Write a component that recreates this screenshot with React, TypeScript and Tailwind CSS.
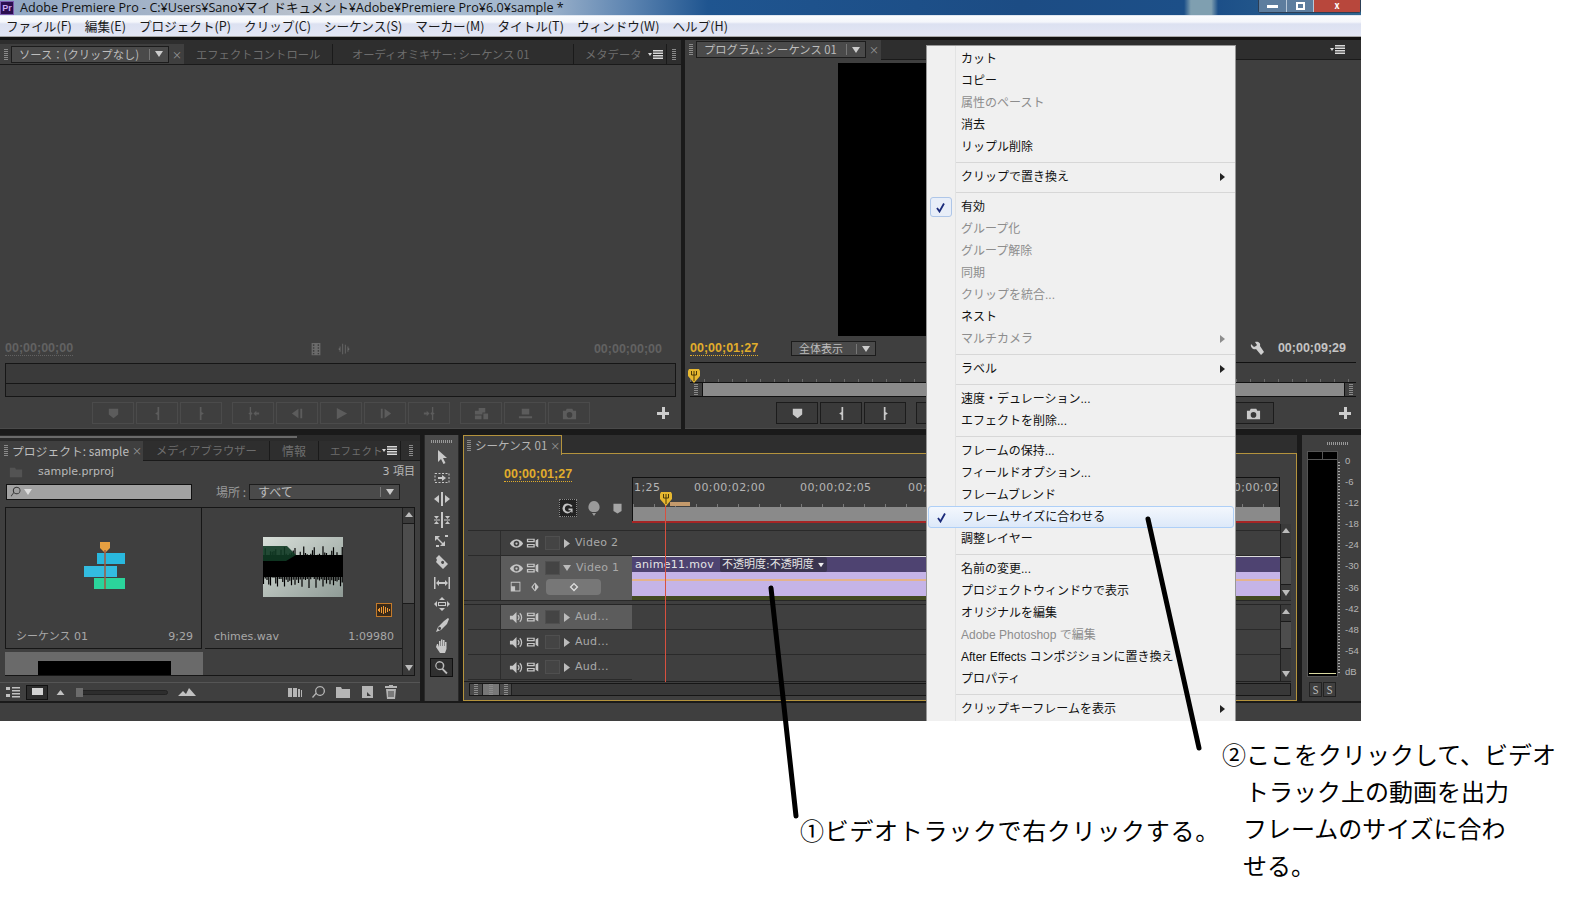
import type { ReactNode } from "react";

const menuBar = ["ファイル(F)", "編集(E)", "プロジェクト(P)", "クリップ(C)", "シーケンス(S)", "マーカー(M)", "タイトル(T)", "ウィンドウ(W)", "ヘルプ(H)"];

type MenuRow = { label?: string; off?: boolean; arrow?: boolean; check?: boolean; hot?: boolean; sep?: boolean };

const menuRows: MenuRow[] = [
  { label: "カット" },
  { label: "コピー" },
  { label: "属性のペースト", off: true },
  { label: "消去" },
  { label: "リップル削除" },
  { sep: true },
  { label: "クリップで置き換え", arrow: true },
  { sep: true },
  { label: "有効", check: true },
  { label: "グループ化", off: true },
  { label: "グループ解除", off: true },
  { label: "同期", off: true },
  { label: "クリップを統合...", off: true },
  { label: "ネスト" },
  { label: "マルチカメラ", off: true, arrow: true },
  { sep: true },
  { label: "ラベル", arrow: true },
  { sep: true },
  { label: "速度・デュレーション..." },
  { label: "エフェクトを削除..." },
  { sep: true },
  { label: "フレームの保持..." },
  { label: "フィールドオプション..." },
  { label: "フレームブレンド" },
  { label: "フレームサイズに合わせる", check: true, hot: true },
  { label: "調整レイヤー" },
  { sep: true },
  { label: "名前の変更..." },
  { label: "プロジェクトウィンドウで表示" },
  { label: "オリジナルを編集" },
  { label: "Adobe Photoshop で編集", off: true },
  { label: "After Effects コンポジションに置き換え" },
  { label: "プロパティ" },
  { sep: true },
  { label: "クリップキーフレームを表示", arrow: true },
];

function Grip() {
  return <div className="w-[4px] h-[11px] shrink-0 bg-[repeating-linear-gradient(0deg,#8a8a8a_0_1px,transparent_1px_2px)]" />;
}

function PanelMenu() {
  return (
    <svg width="15" height="9" viewBox="0 0 15 9" className="shrink-0" fill="#d8d8d8">
      <path d="M0 3h4L2 6z" />
      <path d="M5 0h10v1.400H5zM5 2.500h10v1.400H5zM5 5h10v1.400H5zM5 7.500h10v1.400H5z" />
    </svg>
  );
}

function Caret({ className = "" }: { className?: string }) {
  return (
    <svg width="8" height="6" viewBox="0 0 8 6" className={className} fill="currentColor">
      <path d="M0 0h8L4 6z" />
    </svg>
  );
}

function Glyph({ size = 16, children, className = "" }: { size?: number; children: ReactNode; className?: string }) {
  return (
    <svg width={size} height={size} viewBox="0 0 16 16" fill="currentColor" className={className}>
      {children}
    </svg>
  );
}

const transport: ReactNode[][] = [
  [
    <path key="a" d="M3 3h10v6l-5 4-5-4z" />,
    <path key="b" d="M8 1h1.800v14H8V9.500L5.500 8 8 6.500z" />,
    <path key="c" d="M6.200 1H8v5.500L10.500 8 8 9.500V15H6.200z" />,
  ],
  [
    <path key="d" d="M4 1h1.400v5.500L7 8 5.400 9.500V15H4V9L2.500 8 4 7zM8 8l3-3v2h3v2h-3v2z" />,
    <path key="e" d="M2 8l7-5v10zM11 3h2v10h-2z" />,
    <path key="f" d="M3 2l11 6-11 6z" />,
    <path key="g" d="M3 3h2v10H3zM7 3l7 5-7 5z" />,
    <path key="h" d="M2 7h3V5l3 3-3 3V9H2zM10.600 1H12v6l1.500 1L12 9v6h-1.400V9.500L9 8l1.600-1.500z" />,
  ],
  [
    <path key="i" d="M5 2h7v5H9v2H1V5h4zM10 8h5v6h-5zM1 10h7v4H1z" />,
    <path key="j" d="M4 3h8v6H4zM1 11h14v2H1z" />,
    <path key="k" d="M1 5h3l1-2h6l1 2h3v9H1zM8 6.500a3 3 0 100 6 3 3 0 000-6z" />,
  ],
];

function TransportRow({ dim }: { dim?: boolean }) {
  return (
    <div className="flex gap-[10px] pl-[92px] h-[22px]">
      {transport.map((group, g) => (
        <div key={g} className="flex gap-[2px]">
          {group.map((icon, i) => (
            <div
              key={i}
              className={
                dim
                  ? "w-[42px] h-[22px] flex items-center justify-center border border-[#4b4b4b] text-[#5c5c5c]"
                  : "w-[42px] h-[22px] flex items-center justify-center border border-[#1c1c1c] bg-[#3a3a3a] text-[#c9c9c9]"
              }
            >
              <Glyph size={15}>{icon}</Glyph>
            </div>
          ))}
        </div>
      ))}
    </div>
  );
}

function SourcePanel() {
  return (
    <div className="w-[681px] h-full flex flex-col bg-[#3f3f3f]">
      <div className="h-[25px] flex items-end bg-[#2e2e2e] border-b border-[#1a1a1a] text-[11.300px] leading-[17px] text-[#6d6d6d]">
        <div className="w-[184px] h-[20px] flex items-center bg-[#3f3f3f] pl-[4px]">
          <Grip />
          <div className="ml-[3px] w-[158px] h-[17px] flex items-center border border-[#1c1c1c] bg-[#4a4a4a] text-[#bdbdbd] pl-[7px]">
            <span className="flex-1">ソース：(クリップなし)</span>
            <span className="w-px h-[11px] bg-[#777]" />
            <Caret className="mx-[5px] text-[#ccc]" />
          </div>
          <span className="ml-[3px] text-[10px] text-[#999]">×</span>
        </div>
        <div className="w-[149px] h-[20px] pl-[12px] flex items-center border-r border-[#1a1a1a]">エフェクトコントロール</div>
        <div className="w-[241px] h-[20px] pl-[19px] flex items-center border-r border-[#1a1a1a]">オーディオミキサー: シーケンス 01</div>
        <div className="w-[74px] h-[20px] pl-[11px] flex items-center whitespace-nowrap">メタデータ</div>
        <div className="w-[18px] h-[20px] flex items-center"><PanelMenu /></div>
        <div className="flex-1 h-[20px] flex items-center justify-center border-l border-[#1a1a1a]"><Grip /></div>
      </div>
      <div className="flex-1" />
      <div className="flex justify-between items-center px-[5px] h-[16px] mr-[14px] relative text-[12.500px] text-[#626262] font-['Liberation_Sans',sans-serif] font-bold">
        <span className="border-b border-dotted border-[#626262] leading-[13px]">00;00;00;00</span>
        <div className="flex gap-[14px] text-[#6a6a6a] -ml-[8px]">
          <Glyph size={14}><path d="M3 1h10v14H3zM4.500 2.500v2h1.600v-2zM4.500 6v1.800h1.600V6zM4.500 9.200V11h1.600V9.200zM4.500 12.500v1.500h1.600v-1.500zM9.900 2.500v2h1.600v-2zM9.900 6v1.800h1.600V6zM9.900 9.200V11h1.600V9.200zM9.900 12.500v1.500h1.600v-1.500z" /></Glyph>
          <Glyph size={14}><path d="M2 7h1V5h1v6H3V9H2zM6 2h1v12H6zM9 3h1v10H9zM12 5h1v2h1v2h-1v2h-1z" /></Glyph>
        </div>
        <span>00;00;00;00</span>
      </div>
      <div className="mt-[6px] mx-[5px] h-[20px] border border-[#161616] border-b-0 bg-[#3a3a3a]" />
      <div className="mx-[5px] h-[14px] border border-[#161616] bg-[#393939]" />
      <div className="mt-[5px] relative">
        <TransportRow dim />
        <span className="absolute right-[12px] top-[5px] w-[12px] h-[12px] bg-[linear-gradient(#ccc,#ccc),linear-gradient(#ccc,#ccc)] bg-[length:12px_3px,3px_12px] bg-center bg-no-repeat" />
      </div>
      <div className="h-[5px] border-b border-[#4a4a4a]" />
    </div>
  );
}

function Playhead({ className = "" }: { className?: string }) {
  return (
    <svg width="12" height="14" viewBox="0 0 12 14" className={className}>
      <path d="M1 0h10l1 2v5l-6 7-6-7V2z" fill="#e7b830" />
      <path d="M3.500 2v4h5V2M6 2v10" stroke="#4b3a08" strokeWidth="1" fill="none" />
    </svg>
  );
}

function ProgramPanel() {
  return (
    <div className="flex-1 h-full flex flex-col bg-[#3f3f3f]">
      <div className="h-[20px] flex items-center bg-[#2e2e2e] border-b border-[#1a1a1a] text-[11.300px] leading-[17px]">
        <div className="w-[196px] h-[20px] flex items-center bg-[#3f3f3f] pl-[4px]">
          <Grip />
          <div className="ml-[3px] w-[170px] h-[17px] flex items-center border border-[#1c1c1c] bg-[#4a4a4a] text-[#bdbdbd] pl-[7px] whitespace-nowrap">
            <span className="flex-1">プログラム: シーケンス 01</span>
            <span className="w-px h-[11px] bg-[#777]" />
            <Caret className="mx-[5px] text-[#ccc]" />
          </div>
          <span className="ml-[3px] text-[10px] text-[#999]">×</span>
        </div>
        <div className="flex-1" />
        <div className="pr-[16px]"><PanelMenu /></div>
      </div>
      <div className="h-[3px]" />
      <div className="ml-[153px] w-[250px] h-[273px] bg-black" />
      <div className="h-[5px]" />
      <div className="flex items-center h-[15px] pl-[5px] text-[12.500px]">
        <span className="font-['Liberation_Sans',sans-serif] font-bold text-[#e1ad2c] border-b border-dotted border-[#e1ad2c] leading-[13px]">00;00;01;27</span>
        <div className="ml-[33px] w-[85px] h-[15px] flex items-center border border-[#1c1c1c] bg-[#4a4a4a] text-[#bdbdbd] text-[11px] pl-[7px]">
          <span className="flex-1">全体表示</span>
          <span className="w-px h-[10px] bg-[#777]" />
          <Caret className="mx-[5px] text-[#ccc]" />
        </div>
        <div className="flex-1" />
        <Glyph size={16} className="text-[#cfcfcf] mr-[13px]"><path d="M2 3l3 3 2-1 1-1-2-3c3-1 6 1 5 4l4 6-3 3-5-6C5 9 1 7 2 3z" /></Glyph>
        <span className="font-['Liberation_Sans',sans-serif] font-bold text-[#c4c4c4] mr-[15px]">00;00;09;29</span>
      </div>
      <div className="h-[6px]" />
      <div className="relative mx-[5px] h-[35px] border-y border-[#111] flex flex-col">
        <div className="h-[20px] border-b border-[#111] bg-[repeating-linear-gradient(90deg,#6a6a6a_0_1px,transparent_1px_14px)] bg-[length:100%_3px] bg-bottom bg-no-repeat" />
        <div className="flex-1 flex">
          <div className="w-[13px] bg-[#3f3f3f] border-r border-[#111] flex items-center justify-center"><Grip /></div>
          <div className="flex-1 bg-[#8a8a8a]" />
          <div className="w-[12px] bg-[#3f3f3f] border-l border-[#111] flex items-center justify-center"><Grip /></div>
        </div>
        <Playhead className="absolute -left-[2px] top-[6px]" />
      </div>
      <div className="mt-[5px] relative">
        <div className="-ml-[1px]"><TransportRow /></div>
        <span className="absolute right-[10px] top-[5px] w-[12px] h-[12px] bg-[linear-gradient(#ccc,#ccc),linear-gradient(#ccc,#ccc)] bg-[length:12px_3px,3px_12px] bg-center bg-no-repeat" />
      </div>
      <div className="h-[5px] border-b border-[#4a4a4a]" />
    </div>
  );
}

const wave = Array.from({ length: 46 }, (_, i) => {
  const a = Math.abs(Math.sin(i * 1.7) * 7 + Math.sin(i * 0.6) * 5);
  const b = Math.abs(Math.cos(i * 2.3) * 7 + Math.sin(i * 0.9) * 4);
  return `M${i * 1.75 + 0.5} ${21 - a}V${40 + b}`;
}).join("");

function ProjectPanel() {
  return (
    <div className="w-[420px] h-full flex flex-col bg-[#2a2a2a]">
      <div className="h-[2px] w-[297px] bg-[#6a6a6a] mt-[1px] mb-[3px]" />
      <div className="h-[20px] flex items-center bg-[#2e2e2e] border-b border-[#1a1a1a] text-[11.300px] leading-[17px] text-[#6d6d6d] whitespace-nowrap">
        <div className="w-[143px] h-[20px] flex items-center bg-[#3f3f3f] pl-[4px] text-[#bdbdbd]">
          <Grip />
          <span className="ml-[4px] text-[11.800px]">プロジェクト: sample</span>
          <span className="ml-[3px] text-[10px] text-[#999]">×</span>
        </div>
        <div className="w-[127px] h-[20px] pl-[13px] flex items-center border-r border-[#1a1a1a]">メディアブラウザー</div>
        <div className="w-[49px] h-[20px] pl-[12px] flex items-center border-r border-[#1a1a1a] text-[12px]">情報</div>
        <div className="w-[63px] h-[20px] pl-[11px] flex items-center text-[10.500px]">エフェクト</div>
        <div className="w-[18px] h-[20px] flex items-center"><PanelMenu /></div>
        <div className="flex-1 h-[20px] flex items-center justify-center border-l border-[#1a1a1a]"><Grip /></div>
      </div>
      <div className="flex-1 flex flex-col bg-[#3f3f3f]">
        <div className="h-[20px] flex items-center pl-[9px] pr-[5px] text-[12px] text-[#b8b8b8] font-['DejaVu_Sans','Noto_Sans_CJK_JP',sans-serif] mt-[1px]">
          <Glyph size={14} className="text-[#535353]"><path d="M1 3h6l1 2h7v9H1z" /></Glyph>
          <span className="ml-[15px] flex-1 text-[11px]">sample.prproj</span>
          <span className="text-[11px]">3 項目</span>
        </div>
        <div className="h-[16px] flex items-center pl-[6px] mt-[2px] text-[12px] text-[#9a9a9a]">
          <div className="w-[186px] h-[16px] bg-[#a2a2a2] border border-[#111] flex items-center pl-[3px] text-[#333]">
            <Glyph size={12}><path d="M9 1a5 5 0 11-3.800 8.300L1.800 14 1 13.200l3.500-4.700A5 5 0 019 1zm0 1.200a3.800 3.800 0 100 7.600 3.800 3.800 0 000-7.600z" /></Glyph>
            <Caret className="ml-[2px] text-[#ddd]" />
          </div>
          <span className="ml-[24px] w-[33px] whitespace-nowrap">場所 :</span>
          <div className="w-[151px] h-[16px] flex items-center border border-[#1c1c1c] bg-[#4a4a4a] text-[#bdbdbd] pl-[8px]">
            <span className="flex-1">すべて</span>
            <span className="w-px h-[10px] bg-[#777]" />
            <Caret className="mx-[5px] text-[#ccc]" />
          </div>
        </div>
        <div className="mt-[7px] ml-[5px] mr-[5px] h-[169px] flex border border-[#161616] border-l-0">
          <div className="flex-1 flex flex-col">
            <div className="flex gap-[3px] h-[141px] text-[11px] text-[#a8a8a8] font-['DejaVu_Sans','Noto_Sans_CJK_JP',sans-serif]">
              <div className="relative w-[197px] border border-[#161616] border-t-0">
                <svg width="45" height="48" viewBox="0 0 45 48" className="absolute left-[77px] top-[34px]">
                  <path d="M17 0h10v6l-5 5-5-5z" fill="#e6a041" />
                  <rect x="14" y="11" width="28" height="11" fill="#29b8de" />
                  <rect x="1" y="24" width="33" height="11" fill="#33bce0" />
                  <rect x="11" y="36" width="31" height="11" fill="#2bd49b" />
                  <path d="M22 8v39" stroke="#a3593f" strokeWidth="1.500" />
                </svg>
                <div className="absolute left-[10px] right-[8px] bottom-[3px] flex justify-between">
                  <span>シーケンス 01</span>
                  <span>9;29</span>
                </div>
              </div>
              <div className="relative flex-1 border-b border-[#161616]">
                <svg width="80" height="60" viewBox="0 0 80 60" className="absolute left-[58px] top-[29px]">
                  <defs>
                    <linearGradient id="wv" x1="0" y1="0" x2="1" y2="1">
                      <stop offset="0" stopColor="#d8dfd9" />
                      <stop offset="1" stopColor="#8f9b96" />
                    </linearGradient>
                  </defs>
                  <rect width="80" height="60" fill="url(#wv)" />
                  <path d={wave} stroke="#000" strokeWidth="1.200" />
                  <rect y="18" width="80" height="22" fill="#000" />
                  <path d="M0 9h24l9 9-10 6H0z" fill="#0f3a24" opacity="0.900" />
                </svg>
                <div className="absolute left-[171px] top-[95px] w-[16px] h-[14px] border border-[#c47a2a] bg-[#3a2a18] flex items-center justify-center">
                  <svg width="12" height="8" viewBox="0 0 12 8" fill="#f09a35"><path d="M0 3h1V2h1v4H1V5H0zM3 1h1v6H3zM5 0h1v8H5zM7 1h1v6H7zM9 2h1v4H9zM11 3h1v2h-1z" /></svg>
                </div>
                <div className="absolute left-[9px] right-[8px] bottom-[3px] flex justify-between">
                  <span>chimes.wav</span>
                  <span>1:09980</span>
                </div>
              </div>
            </div>
            <div className="flex-1 mt-[3px]">
              <div className="w-[198px] h-full bg-[#6a6a6a] pt-[9px]">
                <div className="ml-[33px] w-[133px] h-full max-h-[14px] bg-black" />
              </div>
            </div>
          </div>
          <VScroll thumbTop={15} thumbH={81} w={12} />
        </div>
        <div className="mt-[6px] flex-1 flex items-center border-t border-[#555] pl-[5px] text-[#c2c2c2]">
          <Glyph size={16}><path d="M1 3h4v3H1zM1 10h4v3H1zM7 3h8v1.400H7zM7 6h8v1.400H7zM7 9h8v1.400H7zM7 12h8v1.400H7z" /></Glyph>
          <div className="ml-[5px] w-[22px] h-[15px] border border-[#111] bg-[#2d2d2d] flex items-center justify-center">
            <div className="w-[11px] h-[9px] bg-[#d2d2d2] border-b-2 border-[#2d2d2d]" />
          </div>
          <svg width="9" height="5" viewBox="0 0 11 7" fill="#c2c2c2" className="ml-[8px]"><path d="M0 7l5.500-7L11 7z" /></svg>
          <div className="relative ml-[11px] w-[92px] h-[5px] rounded-full bg-[#2d2d2d] border border-[#222]">
            <span className="absolute -left-[1px] -top-[3px] w-[7px] h-[9px] bg-[#6c6c6c]" />
          </div>
          <svg width="18" height="8" viewBox="0 0 18 8" fill="#c2c2c2" className="ml-[10px]"><path d="M0 8l5-5 3 3 3-6 7 8z" /></svg>
          <div className="ml-[91px] flex items-center gap-[8px] text-[#b5b5b5]">
            <Glyph size={16}><path d="M1 4h4v9H1zM6 4h4v9H6zM11 5h2v8h-2zM14 6h1v7h-1z" /></Glyph>
            <Glyph size={16}><path d="M9 2a5 5 0 11-3.800 8.300L2 14l-1-1 3.500-4A5 5 0 019 2zm0 1.300a3.700 3.700 0 100 7.400 3.700 3.700 0 000-7.400z" /></Glyph>
            <Glyph size={16}><path d="M1 3h5l1 2h8v9H1z" /></Glyph>
            <Glyph size={16}><path d="M3 2h11v12H3zM8 8v4h4zM6 7h3v1H7v2H6z" /></Glyph>
            <Glyph size={16}><path d="M6 1h4v1h4v2H2V2h4zM3 5h10l-1 10H4zM5.500 7v6h1V7zM7.500 7v6h1V7zM9.500 7v6h1V7z" /></Glyph>
          </div>
        </div>
      </div>
    </div>
  );
}

function VScroll({ thumbTop, thumbH, w }: { thumbTop: number; thumbH: number; w: number }) {
  return (
    <div className="relative shrink-0 border-l border-[#1f1f1f] bg-[#3a3a3a]" style={{ width: w }}>
      <svg width="8" height="5" viewBox="0 0 8 5" fill="#bbb" className="absolute top-[4px] left-1/2 -translate-x-1/2"><path d="M4 0l4 5H0z" /></svg>
      <div className="absolute left-0 right-0 bg-[#4d4d4d] border-y border-[#1a1a1a]" style={{ top: thumbTop, height: thumbH }} />
      <Caret className="absolute bottom-[4px] left-1/2 -translate-x-1/2 text-[#bbb]" />
    </div>
  );
}

function Toolbar() {
  const tools: ReactNode[] = [
    <path key="1" d="M4 1l9 8H9l2.500 5-2 1L7 10l-3 3z" />,
    <g key="2"><rect x="1" y="3.500" width="14" height="9" fill="none" stroke="currentColor" strokeDasharray="2 1.500" /><path d="M4 7h4V5l4 3-4 3V9H4z" /></g>,
    <path key="3" d="M7 1h2v14H7zM0 8l5-4v8zM16 8l-5-4v8z" />,
    <path key="4" d="M7 0h2v16H7zM0 4l5 0-2.500 3zM16 4h-5l2.500 3zM0 12h5l-2.500-3zM16 12h-5l2.500-3zM0 7.500h6v1H0zM10 7.500h6v1h-6z" />,
    <path key="5" d="M1 3l5 0-2 2 5 5 2-2v5H6l2-2-5-5-2 2zM11 2h3v2h-3zM2 12h3v2H2z" />,
    <path key="6" d="M5 1l9 9-5 5-7-7 1-2-1-2zM8 7a1.500 1.500 0 102 2 1.500 1.500 0 00-2-2z" />,
    <path key="7" d="M0 2h1.500v12H0zM14.500 2H16v12h-1.500zM2 8l3-3v2h6V5l3 3-3 3V9H5v2z" />,
    <path key="8" d="M8 1l3 3H5zM8 15l-3-3h6zM0 8l3-3v6zM16 8l-3-3v6zM4 6h8v4H4zM5 7v2h6V7z" />,
    <path key="9" d="M14 1l1 1-2 5-6 6-5 2 2-5 6-6zM5 10a1.500 1.500 0 102 2 1.500 1.500 0 00-2-2z" />,
    <path key="10" d="M3 6l1 0 1 3V3h1.500v5H7V1.500h1.500V8H9V2h1.500v6h.5V4h1.500v7l-1.500 4H6L2 9z" />,
  ];
  return (
    <div className="w-[35px] h-full bg-[#4a4a4a] flex flex-col items-center text-[#c8c8c8] border-x border-[#2a2a2a]">
      <div className="mt-[5px] w-[22px] h-[3px] bg-[repeating-linear-gradient(90deg,#999_0_1px,transparent_1px_2px)]" />
      <div className="flex flex-col items-center gap-[5px] mt-[6px]">
        {tools.map((t, i) => (
          <Glyph key={i} size={16}>{t}</Glyph>
        ))}
      </div>
      <div className="mt-[4px] w-[23px] h-[19px] bg-[#303030] border border-[#111] flex items-center justify-center">
        <Glyph size={15} className="text-[#bbb]"><path d="M6 1a5 5 0 013.900 8.100l4.600 4.600-1.400 1.400-4.600-4.600A5 5 0 116 1zm0 1.600a3.400 3.400 0 100 6.800 3.400 3.400 0 000-6.800z" /></Glyph>
      </div>
    </div>
  );
}

function TrackHead({ name, audio, selected, open }: { name: string; audio?: boolean; selected?: boolean; open?: boolean }) {
  return (
    <div className={open ? "h-[45px] flex border-b border-[#2a2a2a]" : "h-[25px] flex border-b border-[#2a2a2a]"}>
      <div className="w-[33px] shrink-0 border-r border-[#2d2d2d]" />
      <div className={selected ? "flex-1 bg-[#5c5c5c] pl-[8px] pt-[4px]" : "flex-1 pl-[8px] pt-[4px]"}>
        <div className="flex items-center h-[16px] text-[#c6c6c6]">
          {audio ? (
            <Glyph size={15}><path d="M1 6h3l4-4v12l-4-4H1zM10 5a4 4 0 010 6l-1-1a2.500 2.500 0 000-4zM12 3a7 7 0 010 10l-1-1a5.500 5.500 0 000-8z" /></Glyph>
          ) : (
            <Glyph size={15}><path d="M8 3.500c3.500 0 6 2.500 7 4.500-1 2-3.500 4.500-7 4.500S2 10 1 8c1-2 3.500-4.500 7-4.500zM8 5a3 3 0 100 6 3 3 0 000-6zM8 6.800a1.200 1.200 0 110 2.400 1.200 1.200 0 010-2.400z" /></Glyph>
          )}
          <Glyph size={14} className="ml-[2px]"><path d="M1 3h9v4H1zM2.500 4.300v1.400h6V4.300zM1 9h9v4H1zM2.500 10.300v1.400h6v-1.400zM11 5l3-2v10l-3-2z" /></Glyph>
          <div className="ml-[5px] w-[15px] h-[14px] border border-[#4f4f4f] bg-[#444]" />
          {open ? <Caret className="ml-[3px] text-[#bbb]" /> : (
            <svg width="6" height="9" viewBox="0 0 6 9" fill="#bbb" className="ml-[4px]"><path d="M0 0l6 4.500L0 9z" /></svg>
          )}
          <span className="ml-[5px] text-[11px] text-[#a9a9a9] font-['DejaVu_Sans',sans-serif] tracking-[0.3px]">{name}</span>
        </div>
        {open && (
          <div className="flex items-center h-[20px] mt-[1px] text-[#c6c6c6]">
            <Glyph size={14}><path d="M2 2h11v11H2zM3 3v9h9V3zM3 7h4v5H3z" /></Glyph>
            <Glyph size={12} className="ml-[6px]"><path d="M8 2l5 6-5 6-5-6zM8 4L5 8l3 4z" /></Glyph>
            <div className="ml-[5px] w-[55px] h-[16px] rounded-[4px] bg-[#777] flex items-center justify-center">
              <Glyph size={10} className="text-[#ddd]"><path d="M8 1l7 7-7 7-7-7zM8 4L4 8l4 4 4-4z" /></Glyph>
            </div>
          </div>
        )}
      </div>
    </div>
  );
}

function SequencePanel() {
  return (
    <div className="w-[834px] h-full relative flex flex-col bg-[#3f3f3f] border border-[#b4933d] border-t-0">
      <div className="-ml-px -mr-px h-[19px] flex bg-[#2e2e2e] border-b border-[#b4933d]">
        <div className="w-[99px] h-[20px] flex items-center pl-[3px] bg-[#3f3f3f] border border-[#b4933d] border-b-0 text-[11.500px] text-[#b5b5b5] whitespace-nowrap">
          <Grip />
          <span className="ml-[4px]">シーケンス 01</span>
          <span className="ml-[3px] text-[10px] text-[#999]">×</span>
        </div>
      </div>
      <div className="flex h-[70px]">
        <div className="w-[168px] shrink-0 relative pl-[40px] pt-[14px]">
          <span className="text-[12.500px] font-['Liberation_Sans',sans-serif] font-bold text-[#e1ad2c] border-b border-dotted border-[#e1ad2c] leading-[13px] block w-fit">00;00;01;27</span>
          <div className="flex items-center mt-[17px] ml-[55px] gap-[9px] text-[#c2c2c2]">
            <div className="w-[18px] h-[18px] bg-[#222] border border-dotted border-[#888] flex items-center justify-center">
              <Glyph size={13}><path d="M8 2a6 6 0 015 3l-2 1a4 4 0 100 4h-3V8h5v5h-1.500v-1.500A6 6 0 118 2z" /></Glyph>
            </div>
            <Glyph size={16} className="text-[#9a9a9a]"><path d="M8 1a6 6 0 014 10l-2 1H6l-2-1A6 6 0 018 1zM6 13h4l-2 3z" /></Glyph>
            <Glyph size={13} className="text-[#a5a5a5]"><path d="M3 2h10v9l-5 3-5-3z" /></Glyph>
          </div>
        </div>
        <div className="flex-1 min-w-0 pt-[23px] flex flex-col mr-[16px]">
          <div className="h-[30px] border border-[#111] border-b-0 flex pt-[3px] text-[11px] leading-[14px] text-[#b5b5b5] font-['DejaVu_Sans',sans-serif] tracking-[0.4px] whitespace-nowrap overflow-hidden bg-[repeating-linear-gradient(90deg,#7a7a7a_0_1px,transparent_1px_21px)] bg-[length:100%_3px] bg-bottom bg-no-repeat">
            <span className="w-[61px] shrink-0 pl-[1px]">1;25</span>
            <span className="w-[106px] shrink-0">00;00;02;00</span>
            <span className="w-[108px] shrink-0">00;00;02;05</span>
            <span className="w-[300px] shrink-0">00;</span>
            <span className="flex-1 text-right">00;00;02</span>
          </div>
          <div className="h-[14px] bg-[#8a8a8a] border-l border-[#111]" />
          <div className="h-[2px] bg-[#a52525]" />
        </div>
      </div>
      <div className="flex h-[77px] mr-[5px] border-b border-[#262626]">
        <div className="w-[168px] shrink-0 pl-[4px]">
          <div className="h-[7px] border-b border-[#2a2a2a]" />
          <TrackHead name="Video 2" />
          <TrackHead name="Video 1" selected open />
        </div>
        <div className="flex-1 min-w-0 flex flex-col">
          <div className="h-[7px] border-b border-[#2a2a2a]" />
          <div className="h-[25px] border-b border-[#2a2a2a]" />
          <div className="h-[44px] flex flex-col border-t border-[#ddd]">
            <div className="h-[15px] bg-[#4e4371] text-[11px] leading-[15px] text-[#e5e5e5] font-['DejaVu_Sans','Noto_Sans_CJK_JP',sans-serif] flex items-center pl-[3px] whitespace-nowrap">
              <span className="tracking-[0.3px]">anime11.mov</span>
              <span className="ml-[6px] px-[2px] flex items-center bg-[#3a3550] rounded-[2px]">
                不透明度:不透明度
                <Caret className="ml-[3px] scale-75 text-[#eee]" />
              </span>
            </div>
            <div className="h-[24px] bg-[#c5b4e7] flex flex-col">
              <div className="h-[7px]" />
              <div className="h-[2px] bg-[#e4b38c]" />
            </div>
            <div className="flex-1 bg-[#434a22]" />
          </div>
        </div>
        <VScroll thumbTop={33} thumbH={28} w={11} />
      </div>
      <div className="h-[4px] mr-[5px] border-b border-[#262626]" />
      <div className="flex h-[77px] mr-[5px] border-b border-[#1f1f1f]">
        <div className="w-[168px] shrink-0 pl-[4px]">
          <TrackHead name="Aud..." audio selected />
          <TrackHead name="Aud..." audio />
          <TrackHead name="Aud..." audio />
        </div>
        <div className="flex-1 min-w-0 flex flex-col">
          <div className="h-[25px] border-b border-[#2a2a2a]" />
          <div className="h-[25px] border-b border-[#2a2a2a]" />
        </div>
        <VScroll thumbTop={16} thumbH={28} w={11} />
      </div>
      <div className="mt-[1px] mx-[5px] h-[13px] flex border border-[#161616] bg-[#383838]">
        <div className="w-[13px] border-r border-[#1f1f1f] bg-[#4a4a4a] flex items-center justify-center"><Grip /></div>
        <div className="w-[16px] bg-[#777] flex items-center justify-center"><Grip /></div>
        <div className="w-[13px] border-x border-[#1f1f1f] bg-[#4a4a4a] flex items-center justify-center"><Grip /></div>
      </div>
      <span className="absolute left-[201px] top-[63px] w-px h-[184px] bg-[#d8503f]" />
      <Playhead className="absolute left-[196px] top-[57px]" />
      <span className="absolute left-[206px] top-[67px] w-[20px] h-[4px] bg-[#c49a6c]" />
    </div>
  );
}

function Meter() {
  const labels = ["0", "-6", "-12", "-18", "-24", "-30", "-36", "-42", "-48", "-54", "dB"];
  return (
    <div className="flex-1 h-full flex flex-col bg-[#3f3f3f] pl-[5px]">
      <div className="h-[16px] flex items-center pl-[20px]">
        <div className="w-[21px] h-[3px] bg-[repeating-linear-gradient(90deg,#999_0_1px,transparent_1px_2px)]" />
      </div>
      <div className="flex h-[226px]">
        <div className="w-[31px] border border-[#555] bg-black flex flex-col">
          <div className="h-[8px] flex border-b border-[#555]">
            <div className="flex-1 border-r border-[#555]" />
            <div className="flex-1" />
          </div>
          <div className="flex-1" />
          <div className="h-[1px] mx-[1px] mb-[2px] bg-[#d8d8a0]" />
        </div>
        <div className="w-[2px] mt-[10px] mb-[4px] bg-[repeating-linear-gradient(0deg,#aaa_0_1px,transparent_1px_3px)]" />
        <div className="flex-1 pl-[5px] pt-[5px] flex flex-col justify-between text-[9.500px] leading-[10px] text-[#b5b5b5] font-['Liberation_Sans',sans-serif]">
          {labels.map((l) => <span key={l}>{l}</span>)}
        </div>
      </div>
      <div className="flex gap-[1px] mt-[5px] ml-[2px]">
        <span className="w-[13px] h-[15px] border border-[#222] text-[10px] leading-[13px] text-center text-[#bbb]">S</span>
        <span className="w-[13px] h-[15px] border border-[#222] text-[10px] leading-[13px] text-center text-[#bbb]">S</span>
      </div>
    </div>
  );
}

function ContextMenu() {
  return (
    <div className="absolute left-[926px] top-[45px] w-[310px] h-[676px] overflow-hidden bg-[#f0f0f0] border-l border-t border-r border-[#979797] pt-[2px] text-[12px] leading-[22px] font-['Liberation_Sans','Noto_Sans_CJK_JP',sans-serif]">
      <div className="absolute left-[28px] top-0 bottom-0 w-px bg-[#e2e3e3]" />
      {menuRows.map((r, i) =>
        r.sep ? (
          <div key={i} className="h-[8px] ml-[29px] flex items-center">
            <div className="w-full h-px bg-[#d7d7d7]" />
          </div>
        ) : (
          <div
            key={i}
            className={
              r.hot
                ? "relative h-[22px] mx-[1px] flex items-center rounded-[3px] border border-[#aecff7] bg-[linear-gradient(#f3f7fd,#dde9f9)]"
                : "relative h-[22px] mx-[1px] flex items-center"
            }
          >
            <div className="w-[25px] flex justify-center shrink-0">
              {r.check && (
                <span className={r.hot ? "w-[22px] h-[20px] flex items-center justify-center" : "w-[22px] h-[20px] flex items-center justify-center rounded-[3px] border border-[#aec6e8] bg-[#e8eef8]"}>
                  <svg width="11" height="11" viewBox="0 0 11 11" fill="none" stroke="#1a2a7a" strokeWidth="1.800"><path d="M2 6l2.500 3.500L9 1.500" /></svg>
                </span>
              )}
            </div>
            <span className={r.off ? "pl-[8px] flex-1 whitespace-nowrap text-[#8d8d8d]" : "pl-[8px] flex-1 whitespace-nowrap text-[#111]"}>{r.label}</span>
            {r.arrow && (
              <svg width="5" height="8" viewBox="0 0 5 8" fill={r.off ? "#8d8d8d" : "#222"} className="mr-[9px]"><path d="M0 0l5 4-5 4z" /></svg>
            )}
          </div>
        ),
      )}
    </div>
  );
}

export default function App() {
  return (
    <div className="relative w-[1594px] h-[916px] overflow-hidden bg-white font-['Noto_Sans_CJK_JP','Liberation_Sans',sans-serif]">
      <div className="w-[1361px] h-[721px] flex flex-col bg-[#1a1a1a]">
        <div className="h-[15px] flex items-center bg-[linear-gradient(90deg,#8fa6c4_0%,#b7c0cc_22%,#aebfd2_30%,#9fb4cc_40%,#5f86b2_46%,#1f5590_52%,#1c4c84_75%,#1c4f88_87%,#7f9fb0_87.500%,#7f9fb0_89%,#1c4f88_89.500%,#2f6690_100%)] text-[12.600px] leading-[15px] text-[#111] whitespace-nowrap">
          <div className="w-[14px] h-[14px] bg-[#2b0d4f] border border-[#7a5ab0] text-[#c9a8f0] text-[9px] leading-[12px] text-center font-['Liberation_Sans',sans-serif] font-bold shrink-0">Pr</div>
          <span className="ml-[6px] flex-1 font-['Open_Sans','Noto_Sans_CJK_JP',sans-serif]">Adobe Premiere Pro - C:¥Users¥Sano¥マイ ドキュメント¥Adobe¥Premiere Pro¥6.0¥sample *</span>
          <div className="flex h-[13px] self-start rounded-b-[3px] border-x border-b border-[#2c3e55]">
            <div className="w-[28px] flex items-center justify-center bg-[#5d7d9e] border-r border-[#b8c8d8]"><span className="w-[11px] h-[3px] bg-white" /></div>
            <div className="w-[27px] flex items-center justify-center bg-[#5d7d9e] border-r border-[#b8c8d8]"><span className="w-[9px] h-[8px] border-2 border-white" /></div>
            <div className="w-[46px] flex items-center justify-center bg-[#b8473c] text-white text-[9px] leading-[10px] font-bold">x</div>
          </div>
        </div>
        <div className="h-px bg-[#dfe6f0]" />
        <div className="h-[21px] flex items-center gap-[13px] pl-[6px] bg-[linear-gradient(#fbfcfe_0%,#f4f6fb_30%,#dce1f1_40%,#e2e6f4_100%)] border-b border-[#a8a8a8] text-[12.600px] leading-[20px] text-[#1a1a1a] whitespace-nowrap">
          {menuBar.map((m) => <span key={m}>{m}</span>)}
        </div>
        <div className="h-[3px] bg-[#121212]" />
        <div className="h-[389px] flex gap-[4px]">
          <SourcePanel />
          <ProgramPanel />
        </div>
        <div className="h-[6px] bg-[#1a1a1a]" />
        <div className="h-[266px] flex">
          <ProjectPanel />
          <div className="w-[4px]" />
          <Toolbar />
          <div className="w-[4px]" />
          <SequencePanel />
          <div className="w-[5px]" />
          <Meter />
        </div>
        <div className="h-[2px] bg-[#1a1a1a]" />
        <div className="flex-1 bg-[#3f3f3f]" />
      </div>

      <div className="flex pt-[14px] text-[24px] leading-[37px] text-black">
        <p className="ml-[800px] mt-[76px] w-[422px] whitespace-nowrap tracking-[0.7px]">①ビデオトラックで右クリックする。</p>
        <div className="whitespace-nowrap">
          <p>②ここをクリックして、ビデオ</p>
          <p className="pl-[23px]">トラック上の動画を出力</p>
          <p className="pl-[21px]">フレームのサイズに合わ</p>
          <p className="pl-[21px]">せる。</p>
        </div>
      </div>

      <ContextMenu />

      <svg width="1594" height="916" className="absolute inset-0 pointer-events-none">
        <path d="M771 588L796 816" stroke="#000" strokeWidth="5" strokeLinecap="round" />
        <path d="M1148 519L1199 748" stroke="#000" strokeWidth="5" strokeLinecap="round" />
      </svg>
    </div>
  );
}
